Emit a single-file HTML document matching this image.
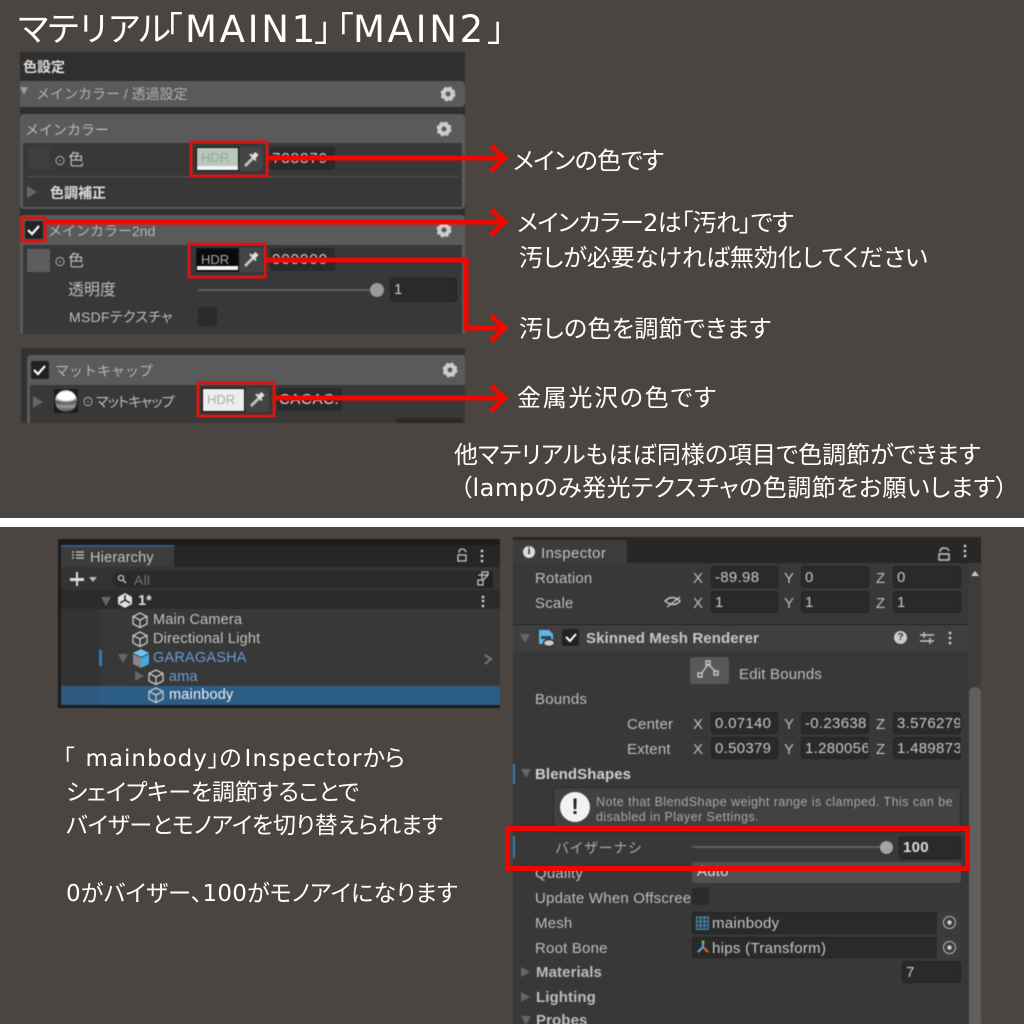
<!DOCTYPE html>
<html lang="ja"><head><meta charset="utf-8"><style>
html,body{margin:0;padding:0;width:1024px;height:1024px;overflow:hidden}
body{background:#4a4541;position:relative;font-family:"Liberation Sans","Noto Sans CJK JP",sans-serif}
div{position:absolute;box-sizing:border-box}
.t{white-space:nowrap;height:20px;line-height:20px;font-size:14px;color:#bdbdbd}
#hi .t{font-size:14.5px;letter-spacing:.2px;margin-top:1px}
#ins .t{font-size:15px;letter-spacing:.2px;margin-top:1px}
#ins .t.s{font-size:12.5px;letter-spacing:.44px;color:#a8a8a8;margin-top:0}
.j{font-family:"DejaVu Sans","Noto Sans CJK JP",sans-serif;font-feature-settings:"palt";color:#fff;white-space:nowrap;font-size:24px;line-height:34px;height:34px}
.h{font-family:"DejaVu Sans","Noto Sans CJK JP",sans-serif;color:#fff;white-space:nowrap;font-size:34px;line-height:52px;height:52px;top:4px}
.b{font-weight:bold}
#hi .t.b,#ins .t.b{font-weight:bold;letter-spacing:.1px}
.f{background:#2a2a2a;border:1px solid #212121;border-radius:3px;color:#c8c8c8;font-size:15px;line-height:22px;padding-left:3px;overflow:hidden;white-space:nowrap;letter-spacing:.3px}
.c{background:#222;border-radius:2px}
#top,#hi,#ins{filter:blur(.45px)}
</style></head><body>

<div class="h" style="left:16px;letter-spacing:-3.6px">マテリアル</div>
<div class="h" style="left:149px">「</div>
<div class="h" style="left:185px;font-size:37px;letter-spacing:2.7px">MAIN1</div>
<div class="h" style="left:314px">」</div>
<div class="h" style="left:320px">「</div>
<div class="h" style="left:353px;font-size:37px;letter-spacing:2.7px">MAIN2</div>
<div class="h" style="left:487px">」</div>

<div id="top" style="left:0;top:0;width:1024px;height:430px">
<div style="left:20px;top:52px;width:445px;height:282px;background:#2f2f2f"></div>
<div class="t b" style="left:23px;top:57px;color:#ddd">色設定</div>
<div style="left:20px;top:81px;width:445px;height:26px;background:#5a5a5a;border-radius:0 4px 4px 0"></div>
<div class="t" style="left:36px;top:84px;color:#b0b0b0">メインカラー / 透過設定</div>
<div style="left:20px;top:87px;border:4px solid transparent;border-top:8px solid #999;border-bottom:0"></div>
<div style="left:20px;top:114px;width:445px;height:95px;background:#5a5a5a;border-radius:4px"></div>
<div style="left:23px;top:143px;width:439px;height:64px;background:#383838"></div>
<div class="t" style="left:25px;top:120px;color:#bbb">メインカラー</div>
<div style="left:28px;top:147px;width:22px;height:22px;background:#3e3e3e"></div>
<div class="t" style="left:54px;top:151px;font-size:12px">⊙</div>
<div class="t" style="left:68px;top:151px;font-size:16px">色</div>
<div style="left:196px;top:147px;width:43px;height:24px;background:#b9c8ba;border:1px solid #111"></div>
<div style="left:197px;top:166px;width:41px;height:4px;background:#f2f2f2"></div>
<div class="t" style="left:201px;top:148px;font-size:13px;color:#97a698">HDR</div>
<div style="left:239px;top:147px;width:24px;height:24px;background:#444;border-radius:3px"></div>
<div style="left:270px;top:147px;width:65px;height:23px;background:#2a2a2a;border-radius:3px;color:#ccc;font-size:15px;letter-spacing:1px;line-height:23px;padding-left:2px;overflow:hidden;white-space:nowrap">788879</div>
<div style="left:27px;top:176px;width:431px;height:1px;background:#555"></div>
<div style="left:27px;top:186px;border:6px solid transparent;border-left:10px solid #666;border-right:0"></div>
<div class="t b" style="left:50px;top:183px;color:#ddd">色調補正</div>

<div style="left:20px;top:215px;width:445px;height:119px;background:#5a5a5a;border-radius:4px 4px 0 0"></div>
<div style="left:23px;top:245px;width:439px;height:89px;background:#383838"></div>
<div class="c" style="left:25px;top:221px;width:18px;height:18px"></div>
<div class="t" style="left:48px;top:221px;color:#b5b5b5">メインカラー2nd</div>
<div style="left:27px;top:249px;width:23px;height:23px;background:#5d5d5d"></div>
<div class="t" style="left:54px;top:252px;font-size:12px">⊙</div>
<div class="t" style="left:68px;top:252px;font-size:16px">色</div>
<div style="left:196px;top:248px;width:43px;height:24px;background:#0a0a0a;border:1px solid #111"></div>
<div style="left:197px;top:266px;width:41px;height:4px;background:#f5f5f5"></div>
<div class="t" style="left:201px;top:250px;font-size:13px;color:#aaa">HDR</div>
<div style="left:239px;top:248px;width:24px;height:24px;background:#444;border-radius:3px"></div>
<div style="left:270px;top:248px;width:65px;height:23px;background:#2a2a2a;border-radius:3px;color:#ccc;font-size:15px;letter-spacing:1px;line-height:23px;padding-left:2px;overflow:hidden;white-space:nowrap">000000</div>
<div class="t" style="left:68px;top:281px;font-size:16px">透明度</div>
<div style="left:198px;top:289px;width:175px;height:2px;background:#5e5e5e"></div>
<div style="left:370px;top:283px;width:14px;height:14px;border-radius:50%;background:#9a9a9a"></div>
<div class="f" style="left:390px;top:278px;width:67px;height:24px">1</div>
<div class="t" style="left:69px;top:307px;font-size:14px;letter-spacing:.3px;font-feature-settings:'palt'">MSDFテクスチャ</div>
<div style="left:198px;top:307px;width:19px;height:19px;background:#2a2a2a;border-radius:3px"></div>
<div style="left:20px;top:334px;width:445px;height:90px;background:#4a4541"></div>
<div style="left:21px;top:348px;width:444px;height:75px;background:#323232"></div>
<div style="left:27px;top:355px;width:438px;height:68px;background:#5a5a5a;border-radius:4px 0 0 0"></div>
<div style="left:30px;top:385px;width:435px;height:38px;background:#383838"></div>
<div class="c" style="left:31px;top:361px;width:18px;height:18px"></div>
<div class="t" style="left:55px;top:361px;color:#b5b5b5">マットキャップ</div>
<div style="left:33px;top:396px;border:6px solid transparent;border-left:10px solid #666;border-right:0"></div>
<div style="left:54px;top:389px;width:24px;height:24px;background:#1c1c1c"></div>
<div style="left:55px;top:390px;width:22px;height:22px;border-radius:50%;background:radial-gradient(ellipse 60% 30% at 50% 28%,#fff 0 60%,transparent 100%),linear-gradient(#999 0,#bbb 30%,#555 55%,#999 75%,#444 100%)"></div>
<div class="t" style="left:82px;top:392px;font-size:12px">⊙</div>
<div class="t" style="left:96px;top:392px;font-size:14px;letter-spacing:-.7px;font-feature-settings:'palt'">マットキャップ</div>
<div style="left:202px;top:388px;width:43px;height:24px;background:#eee;border:1px solid #111"></div>
<div class="t" style="left:207px;top:390px;font-size:13px;color:#aaa">HDR</div>
<div style="left:245px;top:388px;width:24px;height:24px;background:#444;border-radius:3px"></div>
<div style="left:277px;top:388px;width:65px;height:23px;background:#2a2a2a;border-radius:3px;color:#ddd;font-size:15px;letter-spacing:.6px;line-height:23px;padding-left:2px;overflow:hidden;white-space:nowrap">CACAC.</div>
<div style="left:396px;top:418px;width:67px;height:5px;background:#2a2a2a;border-radius:3px 3px 0 0"></div>
<svg style="position:absolute;left:0;top:0" width="520" height="430" fill="none">
<defs><g id="pick"><path d="M245 166L253 158" stroke="#c4c4c4" stroke-width="2.8"/><path d="M253 157.5L257 153.5" stroke="#e0e0e0" stroke-width="4.5"/><path d="M250 154L256 160.5" stroke="#e0e0e0" stroke-width="2"/></g>
<g id="chk"><path d="M0 5L4 9L11 1" stroke="#fff" stroke-width="2.2"/></g></defs>
<use href="#pick"/><use href="#pick" y="100"/><use href="#pick" x="6" y="240"/>
<use href="#chk" x="28" y="225"/><use href="#chk" x="34" y="365"/>
<g stroke="#ccc" stroke-width="4"><circle cx="448" cy="94" r="4.5"/><circle cx="444" cy="129" r="4.5"/><circle cx="444" cy="230" r="4.5"/><circle cx="450" cy="370" r="4.5"/></g>
<g stroke="#ccc" stroke-width="2" stroke-dasharray="3 2.2"><circle cx="448" cy="94" r="6.5"/><circle cx="444" cy="129" r="6.5"/><circle cx="444" cy="230" r="6.5"/><circle cx="450" cy="370" r="6.5"/></g>
</svg>
</div>

<svg style="position:absolute;left:0;top:0" width="1024" height="430" fill="none" stroke="#f00800">
<g stroke="#d91414" stroke-width="3"><rect x="191" y="142" width="76" height="34"/><rect x="22" y="218" width="23" height="23"/><rect x="189" y="244" width="76" height="33"/><rect x="198" y="383" width="76" height="33"/></g>
<g stroke-width="5"><path d="M267 158H505M45 222H505M265 260H466V328H505M274 398H505"/>
<path d="M491 146L505 158L491 171M491 210L505 222L491 235M491 316L505 328L491 341M491 386L505 398L491 411"/></g>
</svg>

<div class="j" style="left:513px;top:144px;letter-spacing:-.6px">メインの色です</div>
<div class="j" style="left:517px;top:206px;letter-spacing:-.65px">メインカラー2は「汚れ」です</div>
<div class="j" style="left:519px;top:241px">汚しが必要なければ無効化してください</div>
<div class="j" style="left:519px;top:312px;letter-spacing:.35px">汚しの色を調節できます</div>
<div class="j" style="left:517px;top:381px;letter-spacing:1.7px">金属光沢の色です</div>
<div class="j" style="left:454px;top:438px">他マテリアルもほぼ同様の項目で色調節ができます</div>
<div class="j" style="left:460px;top:471px;letter-spacing:.5px">（lampのみ発光テクスチャの色調節をお願いします）</div>

<div style="left:0;top:518px;width:1024px;height:9px;background:#fff"></div>

<div id="hi" style="left:0;top:0;width:1024px;height:720px">
<div style="left:58px;top:539px;width:442px;height:169px;background:#1c1c1c"></div>
<div style="left:61px;top:545px;width:439px;height:160px;background:#383838"></div>
<div style="left:61px;top:545px;width:439px;height:22px;background:#262626"></div>
<div style="left:61px;top:545px;width:113px;height:22px;background:#3c3c3c;border-top:2px solid #2c5d87"></div>
<div class="t" style="left:90px;top:547px;color:#c4c4c4">Hierarchy</div>
<div style="left:61px;top:567px;width:439px;height:23px;background:#333"></div>
<div style="left:70px;top:578px;width:14px;height:2.5px;background:#ddd"></div>
<div style="left:75.8px;top:572px;width:2.5px;height:14px;background:#ddd"></div>
<div style="left:89px;top:577px;border:4px solid transparent;border-top:5px solid #bbb;border-bottom:0"></div>
<div style="left:112px;top:571px;width:365px;height:17px;background:#2a2a2a;border-radius:8px 0 0 8px"></div>
<div class="t" style="left:134px;top:569px;font-size:14px;color:#777">All</div>
<div style="left:477px;top:571px;width:16px;height:17px;background:#222"></div>
<div style="left:61px;top:590px;width:439px;height:19px;background:#2b2b2b"></div>
<div style="left:61px;top:609px;width:38px;height:96px;background:#333"></div>
<div style="left:101px;top:597px;border:5px solid transparent;border-top:9px solid #666;border-bottom:0"></div>
<div class="t b" style="left:138px;top:590px;color:#ddd">1*</div>
<div style="left:99px;top:650px;width:3px;height:16px;background:#2d7eb4"></div>
<div style="left:118px;top:654px;border:5px solid transparent;border-top:9px solid #666;border-bottom:0"></div>
<div style="left:135px;top:671px;border:5px solid transparent;border-left:9px solid #666;border-right:0"></div>
<div style="left:61px;top:686px;width:439px;height:19px;background:#2c5d87"></div>
<div style="left:61px;top:686px;width:38px;height:19px;background:#2f5a7e"></div>
<div class="t" style="left:153px;top:609px;color:#c2c2c2">Main Camera</div>
<div class="t" style="left:153px;top:628px;color:#c2c2c2">Directional Light</div>
<div class="t" style="left:153px;top:647px;color:#6d9bd6">GARAGASHA</div>
<div class="t" style="left:169px;top:666px;color:#6d9bd6">ama</div>
<div class="t" style="left:169px;top:684px;color:#f0f0f0">mainbody</div>
<svg style="position:absolute;left:0;top:0" width="520" height="720" fill="none" stroke="#c8c8c8" stroke-width="1.3">
<defs><g id="c"><path d="M8 1L15 4.5V12L8 15.5L1 12V4.5ZM1 4.5L8 8L15 4.5M8 8V15.5"/></g></defs>
<use href="#c" x="132" y="612"/><use href="#c" x="132" y="631"/><use href="#c" x="148" y="669"/><use href="#c" x="148" y="687"/>
<path d="M133 653L141 649L149 653L141 657Z" fill="#6fc4ee" stroke="none"/><path d="M141 658L149 654V664L141 668Z" fill="#47a7de" stroke="none"/><path d="M133 654L141 658V668L133 664Z" fill="#888" stroke="none"/>
<path d="M72 552H74M72 555H74M72 558H74M76 552H84M76 555H84M76 558H84"/>
<circle cx="121" cy="578" r="2.6"/><path d="M123 580L126 583"/>
<path d="M459 553Q459 549 462 549Q465 549 466 552M458 555H466V561H458Z"/>
<path d="M478 575H488V572H482V579M478 580H483V585H478ZM483 580L488 575"/>
<path d="M485 655L491 659L485 664" stroke="#777" stroke-width="2"/>
<path d="M125 593L132 597V604L125 608L118 604V597Z" fill="#e2e2e2" stroke="none"/><path d="M125 595V600L120 603M125 600L130 603" stroke="#2b2b2b" stroke-width="1.6"/>
<g fill="#ccc" stroke="none"><circle cx="482" cy="551" r="1.4"/><circle cx="482" cy="556" r="1.4"/><circle cx="482" cy="561" r="1.4"/><circle cx="483" cy="597" r="1.4"/><circle cx="483" cy="601" r="1.4"/><circle cx="483" cy="606" r="1.4"/></g>
</svg>
</div>

<div class="j" style="left:63px;top:742px;font-size:23px">「<span style="margin-left:11px;letter-spacing:1px">mainbody</span>」の<span style="margin-left:3px;letter-spacing:1.2px">Inspector</span>から</div>
<div class="j" style="left:66px;top:776px;font-size:23px;letter-spacing:-.15px">シェイプキーを調節することで</div>
<div class="j" style="left:66px;top:809px;font-size:23px;letter-spacing:-.17px">バイザーとモノアイを切り替えられます</div>
<div class="j" style="left:66px;top:877px;font-size:23px;letter-spacing:.2px">0がバイザー、100がモノアイになります</div>

<div id="ins" style="left:0;top:0;width:1024px;height:1024px">
<div style="left:513px;top:537px;width:468px;height:487px;background:#383838"></div>
<div style="left:513px;top:537px;width:468px;height:26px;background:#272727"></div>
<div style="left:513px;top:540px;width:114px;height:23px;background:#3c3c3c"></div>
<div style="left:523px;top:546px;width:12px;height:12px;border-radius:50%;background:#ddd;color:#222;font:bold 10px/12px 'Liberation Serif';text-align:center">i</div>
<div class="t" style="left:541px;top:543px;color:#c4c4c4;letter-spacing:.4px">Inspector</div>
<div class="t" style="left:535px;top:568px">Rotation</div>
<div class="t" style="left:535px;top:593px">Scale</div>
<div class="t" style="left:693px;top:568px">X</div><div class="f" style="left:711px;top:566px;width:67px;height:22px">-89.98</div>
<div class="t" style="left:784px;top:568px">Y</div><div class="f" style="left:801px;top:566px;width:68px;height:22px">0</div>
<div class="t" style="left:876px;top:568px">Z</div><div class="f" style="left:893px;top:566px;width:68px;height:22px">0</div>
<div class="t" style="left:693px;top:593px">X</div><div class="f" style="left:711px;top:591px;width:67px;height:22px">1</div>
<div class="t" style="left:784px;top:593px">Y</div><div class="f" style="left:801px;top:591px;width:68px;height:22px">1</div>
<div class="t" style="left:876px;top:593px">Z</div><div class="f" style="left:893px;top:591px;width:68px;height:22px">1</div>
<div style="left:513px;top:624px;width:456px;height:27px;background:#3f3f3f;border-top:1px solid #222"></div>
<div style="left:520px;top:634px;border:5px solid transparent;border-top:9px solid #666;border-bottom:0"></div>
<div class="c" style="left:562px;top:629px;width:17px;height:17px"></div>
<div class="t b" style="left:586px;top:628px;color:#c8c8c8">Skinned Mesh Renderer</div>
<div style="left:894px;top:631px;width:13px;height:13px;border-radius:50%;background:#ccc;color:#333;font:bold 10px/13px 'Liberation Sans';text-align:center">?</div>
<div style="left:690px;top:657px;width:39px;height:27px;background:#585858;border-radius:3px"></div>
<div class="t" style="left:739px;top:664px">Edit Bounds</div>
<div class="t" style="left:535px;top:689px">Bounds</div>
<div class="t" style="left:627px;top:714px">Center</div><div class="t" style="left:627px;top:739px">Extent</div>
<div class="t" style="left:693px;top:714px">X</div><div class="f" style="left:711px;top:712px;width:67px;height:22px">0.07140</div>
<div class="t" style="left:784px;top:714px">Y</div><div class="f" style="left:801px;top:712px;width:68px;height:22px">-0.23638</div>
<div class="t" style="left:876px;top:714px">Z</div><div class="f" style="left:893px;top:712px;width:68px;height:22px">3.576279</div>
<div class="t" style="left:693px;top:739px">X</div><div class="f" style="left:711px;top:737px;width:67px;height:22px">0.50379</div>
<div class="t" style="left:784px;top:739px">Y</div><div class="f" style="left:801px;top:737px;width:68px;height:22px">1.280056</div>
<div class="t" style="left:876px;top:739px">Z</div><div class="f" style="left:893px;top:737px;width:68px;height:22px">1.489873</div>
<div style="left:513px;top:764px;width:2px;height:20px;background:#2d7eb4"></div>
<div style="left:521px;top:769px;border:5px solid transparent;border-top:9px solid #666;border-bottom:0"></div>
<div class="t b" style="left:535px;top:764px;color:#d0d0d0">BlendShapes</div>
<div style="left:553px;top:787px;width:408px;height:46px;background:#414141;border:1px solid #2b2b2b;border-radius:3px"></div>
<div style="left:560px;top:792px;width:30px;height:30px;border-radius:50%;background:#f2f2f2;color:#222;font:bold 22px/30px 'Liberation Sans';text-align:center">!</div>
<div class="t s" style="left:596px;top:792px">Note that BlendShape weight range is clamped. This can be</div>
<div class="t s" style="left:596px;top:807px">disabled in Player Settings.</div>
<div style="left:513px;top:836px;width:2px;height:22px;background:#2d7eb4"></div>
<div class="t" style="left:555px;top:837px;color:#aaa;letter-spacing:.6px;font-size:14px;font-family:'Noto Sans CJK JP'">バイザーナシ</div>
<div style="left:692px;top:846px;width:192px;height:2px;background:#5e5e5e"></div>
<div style="left:880px;top:841px;width:13px;height:13px;border-radius:50%;background:#a5a5a5"></div>
<div class="f" style="left:899px;top:836px;width:62px;height:23px;font-weight:bold;color:#ddd">100</div>
<div style="left:692px;top:862px;width:269px;height:21px;background:#515151;border-radius:3px"></div>
<div class="t" style="left:697px;top:861px;color:#ddd">Auto</div>
<div class="t" style="left:535px;top:863px">Quality</div>
<div class="t" style="left:535px;top:888px;width:157px;overflow:hidden">Update When Offscreen</div>
<div style="left:692px;top:888px;width:17px;height:17px;background:#2a2a2a;border-radius:2px"></div>
<div class="t" style="left:535px;top:913px">Mesh</div>
<div class="f" style="left:692px;top:912px;width:269px;height:22px;padding-left:19px">mainbody</div>
<div class="t" style="left:535px;top:938px">Root Bone</div>
<div class="f" style="left:692px;top:937px;width:269px;height:21px;padding-left:19px;line-height:21px">hips (Transform)</div>
<div style="left:937px;top:912px;width:24px;height:22px;background:#3c3c3c;border-radius:0 3px 3px 0"></div>
<div style="left:937px;top:937px;width:24px;height:21px;background:#3c3c3c;border-radius:0 3px 3px 0"></div>
<div style="left:943px;top:916px;width:13px;height:13px;border-radius:50%;border:1.5px solid #bbb;background:radial-gradient(circle,#ccc 0 2px,transparent 2.5px)"></div>
<div style="left:943px;top:941px;width:13px;height:13px;border-radius:50%;border:1.5px solid #bbb;background:radial-gradient(circle,#ccc 0 2px,transparent 2.5px)"></div>
<div style="left:696px;top:916px;width:13px;height:14px;background:repeating-linear-gradient(90deg,#4f89a8 0 1px,transparent 1px 4px),repeating-linear-gradient(0deg,#4f89a8 0 1px,#27414f 1px 4px)"></div>
<div class="t b" style="left:536px;top:962px">Materials</div>
<div class="f" style="left:902px;top:961px;width:59px;height:22px">7</div>
<div class="t b" style="left:536px;top:987px">Lighting</div>
<div class="t b" style="left:536px;top:1010px">Probes</div>
<div style="left:521px;top:967px;border:5px solid transparent;border-left:9px solid #666;border-right:0"></div>
<div style="left:521px;top:992px;border:5px solid transparent;border-left:9px solid #666;border-right:0"></div>
<div style="left:521px;top:1016px;border:5px solid transparent;border-top:9px solid #666;border-bottom:0"></div>
<div style="left:969px;top:563px;width:12px;height:461px;background:#3c3c3c"></div>
<div style="left:969px;top:687px;width:12px;height:337px;background:#5f5f5f;border-radius:6px 6px 0 0"></div>
<div style="left:971px;top:571px;border:4px solid transparent;border-bottom:5px solid #ccc;border-top:0"></div>
<svg style="position:absolute;left:0;top:0" width="1024" height="1024" fill="none" stroke="#c8c8c8" stroke-width="1.4">
<path d="M940 552Q940 548 944 548Q948 548 949 551M939 554H949V560H939Z"/>
<path d="M667 607L680 597M665 601Q672 594 680 601Q674 608 665 601Z"/>
<path d="M702 673L708 664L716 672M698 673h4v4h-4zM706 661h4v4h-4zM714 671h4v4h-4z"/>
<path d="M920 635H934M920 641H934M924 632V638M930 638V644"/>
<path d="M566 637L570 641L576 634" stroke="#fff" stroke-width="2"/>
<path d="M539 630H549L553 634V644H539Z" fill="#62b5e5" stroke="none"/><path d="M541 636H551V639H541Z" fill="#2b4a5c" stroke="none"/>
<ellipse cx="549" cy="643" rx="5.5" ry="3.5" fill="#ccc" stroke="#333"/>
<g fill="#ccc" stroke="none"><circle cx="965" cy="546" r="1.4"/><circle cx="965" cy="551" r="1.4"/><circle cx="965" cy="556" r="1.4"/><circle cx="950" cy="633" r="1.4"/><circle cx="950" cy="638" r="1.4"/><circle cx="950" cy="643" r="1.4"/></g>
<path d="M703 942V947L698 952" stroke="#5bb1dc" stroke-width="2"/><path d="M703 947L708 952" stroke="#e2643a" stroke-width="2"/><circle cx="703" cy="942" r="1.5" fill="#7cc04b" stroke="none"/>
</svg>
</div>
<div style="left:505px;top:826px;width:465px;height:45px;border:5px solid #f00800"></div>
</body></html>
